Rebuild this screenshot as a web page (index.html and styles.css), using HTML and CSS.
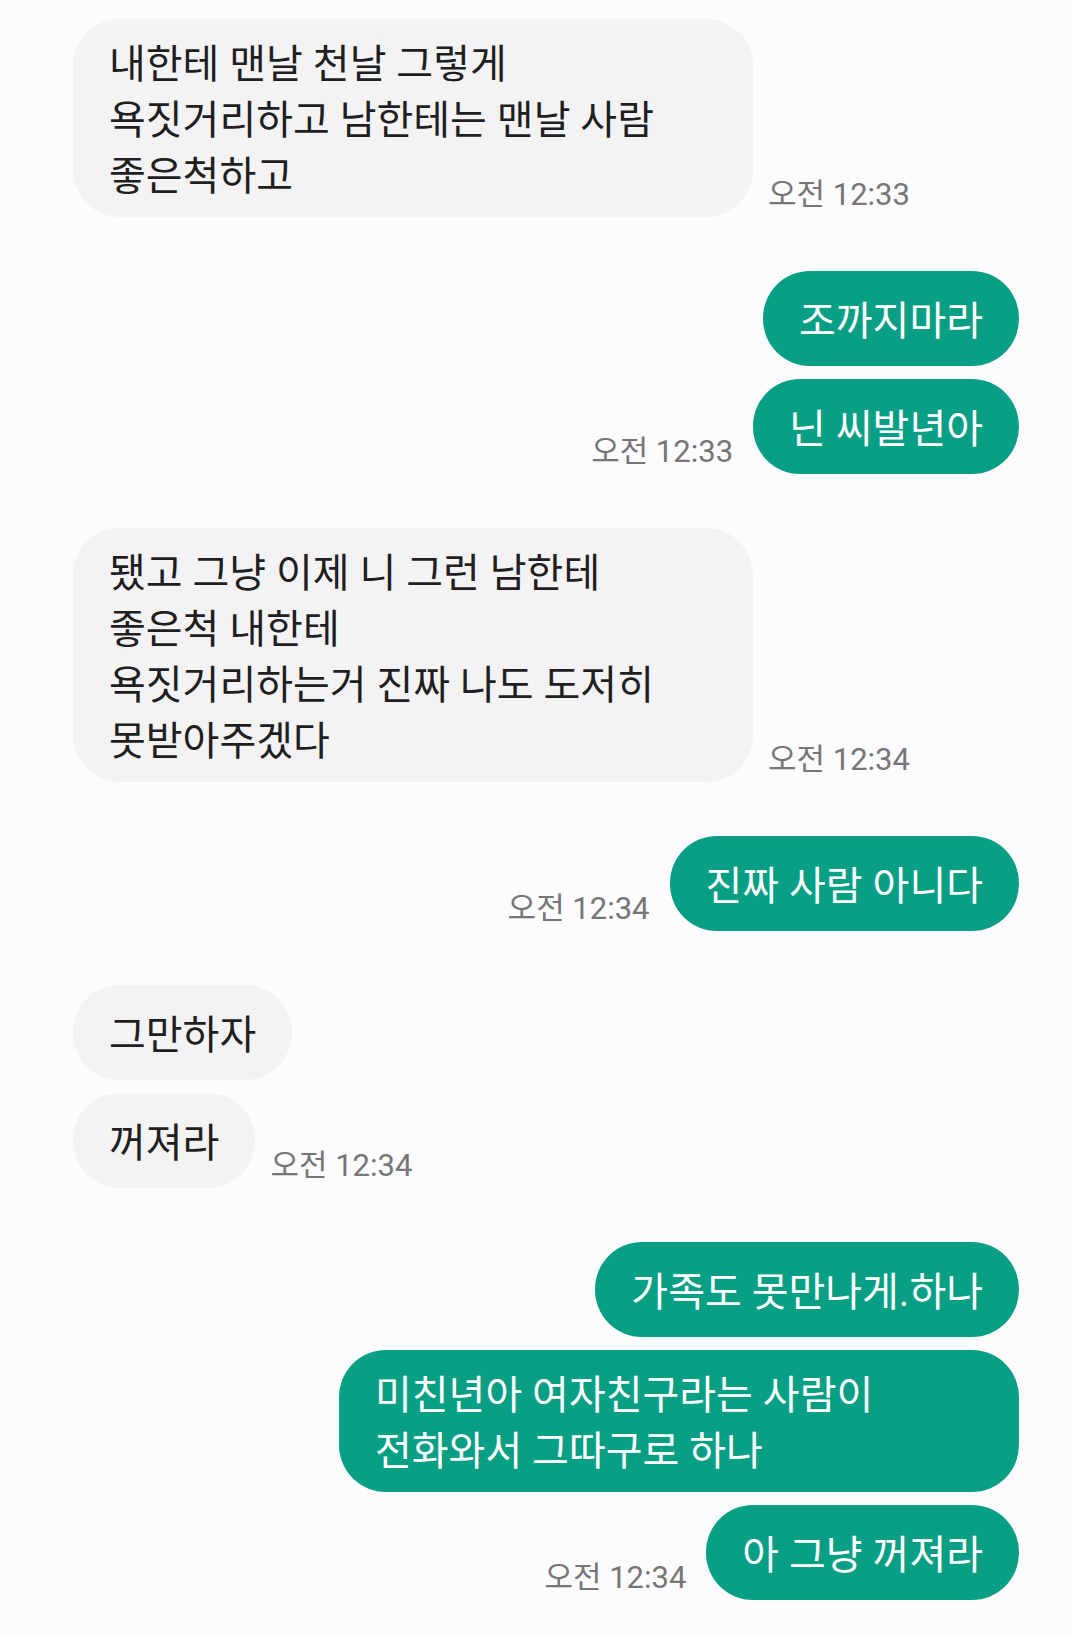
FILE: index.html
```html
<!DOCTYPE html>
<html lang="ko">

<head>
    <meta charset="utf-8" />
    <title>채팅</title>
    <link rel="stylesheet" href="styles.css">
</head>

<body>
    <div class="chat">
        <div class="row in">
            <div class="bubble wide">내한테 맨날 천날 그렇게<br>욕짓거리하고 남한테는 맨날 사람<br>좋은척하고</div>
            <span class="time">오전 12:33</span>
        </div>

        <div class="row out">
            <div class="bubble">조까지마라</div>
        </div>
        <div class="row out next">
            <span class="time">오전 12:33</span>
            <div class="bubble">닌 씨발년아</div>
        </div>

        <div class="row in">
            <div class="bubble wide">됐고 그냥 이제 니 그런 남한테<br>좋은척 내한테<br>욕짓거리하는거 진짜 나도 도저히<br>못받아주겠다</div>
            <span class="time">오전 12:34</span>
        </div>

        <div class="row out">
            <span class="time">오전 12:34</span>
            <div class="bubble">진짜 사람 아니다</div>
        </div>

        <div class="row in">
            <div class="bubble">그만하자</div>
        </div>
        <div class="row in next">
            <div class="bubble">꺼져라</div>
            <span class="time">오전 12:34</span>
        </div>

        <div class="row out">
            <div class="bubble">가족도 못만나게.하나</div>
        </div>
        <div class="row out next">
            <div class="bubble wide">미친년아 여자친구라는 사람이<br>전화와서 그따구로 하나</div>
        </div>
        <div class="row out next">
            <span class="time">오전 12:34</span>
            <div class="bubble">아 그냥 꺼져라</div>
        </div>
    </div>
</body>

</html>
```

FILE: styles.css
```css
* {
    box-sizing: border-box;
    margin: 0;
    padding: 0;
}

body {
    background: #fcfcfe;
    font-family: Roboto, "Noto Sans CJK KR", sans-serif;
    color: #1f1f1f;
}

.chat {
    display: flex;
    flex-direction: column;
    padding: 19px 53px 40px 73px;
}

.row {
    display: flex;
    align-items: flex-end;
    gap: 15px;
    margin-top: 54px;
}

.row:first-child {
    margin-top: 0;
}

.row.next {
    margin-top: 13px;
}

.row.out {
    justify-content: flex-end;
    gap: 20px;
}

.bubble {
    min-height: 95px;
    display: flex;
    align-items: center;
    padding: 18px 36px 12px;
    border-radius: 47px;
    font-size: 40px;
    line-height: 56px;
    background: #f3f3f4;
}

.bubble.wide {
    width: 680px;
    display: block;
}

.out .bubble {
    background: #089f85;
    color: #fff;
}

.time {
    font-size: 31px;
    line-height: 36px;
    margin-bottom: 4px;
    color: #767676;
    white-space: nowrap;
}
```
